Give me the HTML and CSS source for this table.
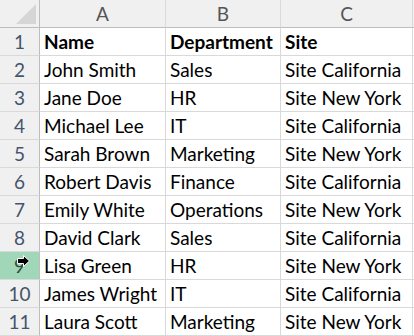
FILE: index.html
```html
<!DOCTYPE html>
<html>
<head>
<meta charset="utf-8">
<link rel="stylesheet" href="styles.css">
</head>
<body>
<div class="sheet">
  <div class="corner"><span class="tri"></span></div>
  <div class="colhead">A</div>
  <div class="colhead">B</div>
  <div class="colhead">C</div>
  <div class="colhead end"></div>

  <div class="rowhead">1</div><div class="cell bold">Name</div><div class="cell bold">Department</div><div class="cell bold">Site</div><div class="cell end"></div>
  <div class="rowhead">2</div><div class="cell">John Smith</div><div class="cell">Sales</div><div class="cell">Site California</div><div class="cell end"></div>
  <div class="rowhead">3</div><div class="cell">Jane Doe</div><div class="cell">HR</div><div class="cell">Site New York</div><div class="cell end"></div>
  <div class="rowhead">4</div><div class="cell">Michael Lee</div><div class="cell">IT</div><div class="cell">Site California</div><div class="cell end"></div>
  <div class="rowhead">5</div><div class="cell">Sarah Brown</div><div class="cell">Marketing</div><div class="cell">Site New York</div><div class="cell end"></div>
  <div class="rowhead">6</div><div class="cell">Robert Davis</div><div class="cell">Finance</div><div class="cell">Site California</div><div class="cell end"></div>
  <div class="rowhead">7</div><div class="cell">Emily White</div><div class="cell">Operations</div><div class="cell">Site New York</div><div class="cell end"></div>
  <div class="rowhead">8</div><div class="cell">David Clark</div><div class="cell">Sales</div><div class="cell">Site California</div><div class="cell end"></div>
  <div class="rowhead selected">9
    <svg class="cursor" width="14" height="12" viewBox="0 0 14 12"><path d="M0.5 3.5 H6.5 V0.5 L12.5 6 L6.5 11.5 V8.5 H0.5 Z" fill="#000" stroke="#fff" stroke-width="1"/></svg>
  </div><div class="cell">Lisa Green</div><div class="cell">HR</div><div class="cell">Site New York</div><div class="cell end"></div>
  <div class="rowhead">10</div><div class="cell">James Wright</div><div class="cell">IT</div><div class="cell">Site California</div><div class="cell end"></div>
  <div class="rowhead">11</div><div class="cell">Laura Scott</div><div class="cell">Marketing</div><div class="cell">Site New York</div><div class="cell end"></div>
</div>
</body>
</html>
```
FILE: styles.css
```css
html, body {
  margin: 0;
  padding: 0;
  background: #ffffff;
}
.sheet {
  display: grid;
  grid-template-columns: 40px 126px 115px 132px 1fr;
  grid-auto-rows: 28px;
  width: 414px;
  height: 336px;
  overflow: hidden;
  font-family: Lato, "Open Sans", sans-serif;
  font-size: 19px;
  color: #000;
}
.sheet > div {
  box-sizing: border-box;
  border-right: 1px solid #d9d9d9;
  border-bottom: 1px solid #d9d9d9;
  display: flex;
  align-items: center;
  white-space: nowrap;
  overflow: hidden;
}
.corner {
  background: #f0f0f0;
  position: relative;
  border-right-color: #bdbdbd !important;
  border-bottom-color: #bdbdbd !important;
}
.tri {
  position: absolute;
  right: 3px;
  bottom: 3px;
  width: 0;
  height: 0;
  border-left: 20px solid transparent;
  border-bottom: 20px solid #d6d6d6;
}
.colhead {
  background: #f0f0f0;
  justify-content: center;
  color: #555;
  border-bottom-color: #bdbdbd !important;
}
.rowhead {
  background: #f0f0f0;
  justify-content: center;
  color: #44546a;
  border-right-color: #bdbdbd !important;
  position: relative;
}
.rowhead.selected {
  background: #a0d7b8;
  color: #2f4a3c;
}
.cursor {
  position: absolute;
  left: 17px;
  top: 3px;
}
.cell {
  padding-left: 4px;
}
.bold {
  font-weight: bold;
}
.end {
  border-right: none !important;
  background: #fff;
}
.colhead.end {
  background: #f0f0f0;
}
```
